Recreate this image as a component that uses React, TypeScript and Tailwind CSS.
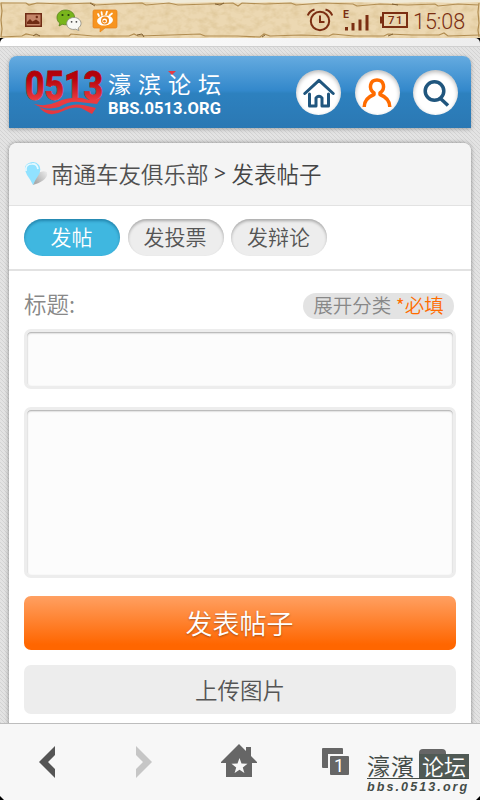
import * as React from "react";
import { clsx } from "clsx";

const TABS = ["发帖", "发投票", "发辩论"];

function PictureIcon() {
  return (
    <svg viewBox="0 0 17 14" className="h-3.5 w-[17px]" aria-hidden>
      <rect x="0.75" y="0.75" width="15.5" height="12.5" fill="#c48468" stroke="#6f2b14" strokeWidth="1.5" />
      <path d="M2 11V9l3-3 2.500 2.500L11 6.500l3.500 2.500v2z" fill="#6f2b14" />
      <circle cx="11.800" cy="4" r="1.200" fill="#6f2b14" />
    </svg>
  );
}

function WechatIcon() {
  return (
    <svg viewBox="0 0 26 22" className="h-[22px] w-[26px]" aria-hidden>
      <path
        d="M9.500 1C4.700 1 1 4.200 1 8.500c0 2.500 1 4.400 2.800 5.700L3 17l3.200-1.700c5.800 1.600 12.300-1 12.300-7.300C18.500 4.200 14.300 1 9.500 1z"
        fill="#79b51c"
        stroke="#55801a"
        strokeWidth="0.8"
      />
      <circle cx="6.500" cy="6" r="1.100" fill="#26400c" />
      <circle cx="12.500" cy="6" r="1.100" fill="#26400c" />
      <path
        d="M18 8.500c-4.200 0-7.300 2.700-7.300 6 0 4.500 4.800 6.700 9 5.700l3.200 1.300-.7-2.500c1.700-1.100 2.800-2.600 2.800-4.500 0-3.300-3-6-7-6z"
        fill="#f8f8f4"
        stroke="#8c8a80"
        strokeWidth="0.8"
      />
      <circle cx="15.600" cy="12.800" r="0.900" fill="#444" />
      <circle cx="20.400" cy="12.800" r="0.900" fill="#444" />
    </svg>
  );
}

function WeiboIcon() {
  return (
    <svg viewBox="0 0 26 24" className="h-6 w-[26px]" aria-hidden>
      <path d="M2.500 1h21q1.500 0 1.500 1.500v15q0 1.500-1.500 1.500H13l-5 4 .2-4H2.500Q1 19 1 17.500v-15Q1 1 2.500 1z" fill="#f7941f" stroke="#e5831a" strokeWidth="0.700" />
      <ellipse cx="13" cy="11.500" rx="8" ry="5" fill="#fff" transform="rotate(-7 13 11.500)" />
      <circle cx="13" cy="11.500" r="4" fill="#f28a16" />
      <circle cx="12.700" cy="12" r="2.400" fill="#fff" />
      <circle cx="12.500" cy="12.200" r="1.300" fill="#ef8111" />
      <path d="M7 7l-1-2M10 6L9.500 3M14 5.500l1-3M17.500 6.500l2.500-2" stroke="#fff" strokeWidth="1.700" strokeLinecap="round" />
    </svg>
  );
}

function AlarmIcon() {
  return (
    <svg viewBox="0 0 26 24" className="h-6 w-[26px]" fill="none" stroke="#7b2e12" strokeWidth="2" aria-hidden>
      <circle cx="13" cy="13" r="9.200" />
      <path d="M13 7.500V14h4.500M.8 7.500Q2.500 3 7.500 1.500M18.500 1.500Q23.500 3 25.200 7.500" />
    </svg>
  );
}

function SignalIcon() {
  return (
    <svg viewBox="0 0 26 22" className="h-[22px] w-[26px]" fill="#7b2e12" aria-hidden>
      <rect x="2" y="18" width="3" height="3.500" />
      <rect x="8.500" y="14" width="3" height="7.500" />
      <rect x="15.500" y="10.500" width="3" height="11" />
      <rect x="22.500" y="6" width="3" height="15.500" />
      <text x="0" y="8.500" fontSize="10.500" fontWeight="700" fontFamily="Roboto, sans-serif">E</text>
    </svg>
  );
}

function StatusBar() {
  return (
    <header className="relative h-[38px] shrink-0 bg-[#ecd8b2] font-[Roboto,sans-serif] text-[#7b2e12]">
      <svg className="absolute inset-0 h-[38px] w-[480px]" viewBox="0 0 480 38" aria-hidden>
        <filter id="grain" x="0" y="0" width="100%" height="100%">
          <feTurbulence type="fractalNoise" baseFrequency="0.11 0.16" numOctaves="3" seed="4" />
          <feColorMatrix values="0 0 0 0 0.62  0 0 0 0 0.45  0 0 0 0 0.2  0.9 0 0 0 -0.36" />
        </filter>
        <rect width="480" height="38" filter="url(#grain)" />
        <path d="M0 0H480V2L452 3 430 2 392 3 352 2 310 3 268 2 250 3 215 2 176 3 140 2 98 3 60 2 30 3 0 2z" fill="#f1ebd9" />
        <g fill="none" stroke="#b18d52" strokeWidth="1.200">
          <path d="M1 3L26 3l3 2 8-2 26 1 28-1 5 2 18-1 28-1 4 2 23-2 9 2 31-1 24-1 5 3 4-3 23 1 26-1 5 2 27-2 30 1 4 2 23-2 28 1 27-1 3 2 20-2 21 1" />
          <path d="M1 37l21-1 4-2 10 2 33 0 2-2 22 2 36 0 5-2 4 2 33-1 29-1 5 2 32 0 23 1 4-3 6 2 31-1 28 1 4-2 21 2 30 0 4-2 24 1 27 0 5-2 4 3 32-1" />
          <path d="M1 3l1 8-1 9 1 9-1 8M479 3l-1 9 1 11-1 7 1 7" />
        </g>
        <path d="M33 36l3-2 4 2M137 35l5-1 2 3M262 37l3-2M388 36l5-2M215 4l5 1 4-2M90 3l5 3M392 4l6 1" stroke="#806032" fill="none" />
      </svg>
      <div className="relative flex h-[38px] items-center pl-[25px] pr-3.5 pt-0.5">
        <PictureIcon />
        <div className="ml-3.5">
          <WechatIcon />
        </div>
        <div className="ml-[10px] mt-0.5">
          <WeiboIcon />
        </div>
        <div className="ml-auto flex items-center">
          <AlarmIcon />
          <div className="mb-px ml-2.5">
            <SignalIcon />
          </div>
          <svg viewBox="0 0 28 16" className="ml-[11px] h-4 w-7" fill="none" stroke="#7b2e12" strokeWidth="2" aria-hidden>
            <path d="M3 1H27V15H3z" />
            <path d="M1 4.500v7" />
            <text x="8" y="12" fill="#7b2e12" stroke="none" fontSize="11.500" letterSpacing="1.500" fontWeight="500" fontFamily="Roboto, sans-serif">71</text>
          </svg>
          <span className="ml-[5px] w-[53px] whitespace-nowrap pt-1 text-[21.500px] leading-none">15:08</span>
        </div>
      </div>
    </header>
  );
}

function Logo() {
  return (
    <div className="flex text-white">
      <svg viewBox="0 0 78 50" className="h-[50px] w-[78px] overflow-visible" aria-hidden>
        <defs>
          <linearGradient id="red" x1="0" y1="0" x2="0" y2="48" gradientUnits="userSpaceOnUse">
            <stop offset="0" stopColor="#a90008" />
            <stop offset="0.250" stopColor="#b8040c" />
            <stop offset="0.700" stopColor="#ec3c40" />
            <stop offset="1" stopColor="#e23840" />
          </linearGradient>
        </defs>
        <text
          x="-1"
          y="33"
          textLength="78"
          lengthAdjust="spacingAndGlyphs"
          fontFamily="Roboto, sans-serif"
          fontSize="40"
          fontWeight="800"
          fill="url(#red)"
          stroke="url(#red)"
          strokeWidth="0.800"
        >
          0513
        </text>
        <path
          d="M8 37Q20 40 31 35T56 31Q66 35 75 31L71 37 53 35Q43 34 33 40 20 44 8 37zM13 40Q25 46 36 42 46 36 57 38L70 41 66 47 55 41Q46 39 37 44 22 52 13 40z"
          fill="url(#red)"
        />
      </svg>
      <div className="relative ml-1 flex flex-col whitespace-nowrap pt-[3px]">
        <span className="h-[29px] text-[23px] font-normal leading-[27px] tracking-[7px]">濠滨论坛</span>
        <svg viewBox="0 0 8 6" className="absolute left-[60px] top-1 h-1.5 w-2" aria-hidden>
          <path d="M0 0h8L4 4z" fill="#e63b43" />
        </svg>
        <span className="pt-px font-[Roboto,sans-serif] text-[16.5px] font-bold leading-[18px] tracking-[0.1px]">BBS.0513.ORG</span>
      </div>
    </div>
  );
}

function RoundButton({ label, children }: { label: string; children: React.ReactNode }) {
  return (
    <button
      aria-label={label}
      className="flex size-[45px] items-center justify-center rounded-full bg-white shadow-[inset_0_2px_4px_rgba(0,0,0,0.28)]"
    >
      {children}
    </button>
  );
}

function SiteHeader() {
  return (
    <div className="flex h-[72px] shrink-0 items-center rounded-t-lg bg-[linear-gradient(#65abe0_0%,#3388cb_48%,#2d81bf_52%,#2b78b3_100%)] pl-[17px] pr-[13px] shadow-[0_1px_4px_rgba(0,0,0,0.3)]">
      <Logo />
      <div className="ml-auto flex gap-[13.500px] pt-px">
        <RoundButton label="首页">
          <svg viewBox="0 0 32 30" className="h-[30px] w-8" fill="none" stroke="#20567e" strokeWidth="3" strokeLinecap="round" strokeLinejoin="round" aria-hidden>
            <path d="M1.800 15.500L16 2.300l14.200 13.200M6.500 16v12H13v-8q3-3.500 6 0v8h6.500V16" />
          </svg>
        </RoundButton>
        <RoundButton label="我的">
          <svg viewBox="0 0 30 30" className="size-[30px]" fill="none" stroke="#ff6c00" strokeWidth="3.500" aria-hidden>
            <path d="M2.200 29c0-6 3.500-10 9.800-12.500v-1.500c-6-4.500-4-13 3-13s9 8.500 3 13v1.500c6.300 2.500 9.800 6.500 9.800 12.500" strokeLinejoin="round" />
          </svg>
        </RoundButton>
        <RoundButton label="搜索">
          <svg viewBox="0 0 28 28" className="size-7" fill="none" stroke="#20567e" strokeWidth="3.500" aria-hidden>
            <circle cx="12.500" cy="12" r="9.300" />
            <path d="M18.500 19.500l7.500 7" />
          </svg>
        </RoundButton>
      </div>
    </div>
  );
}

function Breadcrumb() {
  return (
    <div className="flex h-[63px] items-center border-b border-[#e2e2e2] bg-[#f4f4f4] pl-[15px] text-[22.5px] text-[#505050]">
      <svg viewBox="0 0 26 26" className="h-[26px] w-[26px]" aria-hidden>
        <defs>
          <linearGradient id="pinShade" x1="0.200" y1="0.800" x2="1" y2="0.200">
            <stop offset="0" stopColor="#aaa" />
            <stop offset="1" stopColor="#e6e6e6" />
          </linearGradient>
        </defs>
        <path d="M9 24Q10 15 14 12q6-3 9-.5 1 4-4 8-4 3-10 4.500z" fill="url(#pinShade)" />
        <path d="M9 24Q6 18 3 14-2 5 5 2q6-3 10 2 3 5-1 11-3 4-5 9z" fill="#91e2ff" />
        <path d="M2 10Q1 3 8 3q5-.5 6 5" fill="none" stroke="#e6f9ff" strokeWidth="1.700" />
      </svg>
      <span className="ml-px">南通车友俱乐部</span>
      <span className="mx-[5.500px] w-3 text-center font-['Open_Sans',sans-serif] text-[21px] font-medium text-[#444]">&gt;</span>
      <span className="text-[#444]">发表帖子</span>
    </div>
  );
}

function TypeTabs() {
  const [active, setActive] = React.useState(0);
  return (
    <div className="flex h-[65px] gap-[7.500px] border-b-2 border-[#e2e2e2] pl-[15px] pt-[13px]">
      {TABS.map((tab, i) => (
        <button
          key={tab}
          onClick={() => setActive(i)}
          className={clsx(
            "h-[37px] w-24 rounded-full pb-0.5 pr-px text-[21px] leading-none",
            i === active
              ? "bg-[#3fb7e0] text-white shadow-[inset_0_2px_3px_rgba(0,70,110,0.45)]"
              : "bg-[#ededed] text-[#555] shadow-[inset_0_2px_3px_rgba(0,0,0,0.28)]",
          )}
        >
          {tab}
        </button>
      ))}
    </div>
  );
}

const fieldClass =
  "block w-full resize-none rounded-[7px] border-[3px] border-[#ededed] bg-[#fcfcfc] px-2 outline-none shadow-[inset_0_1px_2px_rgba(0,0,0,0.35)]";

function PostForm() {
  return (
    <form className="flex flex-col px-[15px]" onSubmit={(e) => e.preventDefault()}>
      <div className="flex h-[58px] items-start justify-between pr-0.5">
        <label htmlFor="subject" className="pt-[15px] text-[22.5px] leading-[34px] text-[#888]">
          标题:
        </label>
        <button type="button" className="mt-[22px] flex h-[26px] w-[151px] items-center justify-center whitespace-pre rounded-full bg-[#e3e3e3] pb-[3px] text-[19.5px] leading-none text-[#888]">
          展开分类 <span className="text-[#ff6c00]">*必填</span>
        </button>
      </div>
      <input id="subject" className={clsx(fieldClass, "h-[60px]")} />
      <textarea aria-label="内容" className={clsx(fieldClass, "mt-[18px] h-[171px]")} />
      <button className="mt-[18px] h-[54px] rounded-[7px] bg-[linear-gradient(#ffa062,#ff6600_90%)] pb-0.5 pr-px text-[27px] leading-none text-white [text-shadow:0_1px_2px_rgba(0,0,0,0.35)]">
        发表帖子
      </button>
      <button type="button" className="mt-[15px] h-[49px] rounded-[7px] bg-[#ededed] text-[22.5px] leading-none text-[#555]">
        上传图片
      </button>
    </form>
  );
}

function Watermark() {
  return (
    <div className="absolute left-[367px] top-[29px] w-[102px] text-[#444c47]">
      <div className="flex h-[26px] items-center border-b border-[#444c47]">
        <span className="w-[52px] whitespace-nowrap font-['Noto_Sans_CJK_TC',sans-serif] text-[23px] font-normal leading-none tracking-[1px]">濠濱</span>
        <span className="h-6 w-[50px] whitespace-nowrap bg-[#505a55] pl-[3px] text-[22px] leading-[23px] text-white">论坛</span>
      </div>
      <div className="mt-px whitespace-nowrap font-['Liberation_Sans',sans-serif] text-[12.5px] font-bold italic leading-[15px] tracking-[2.100px]">
        bbs.0513.org
      </div>
    </div>
  );
}

function BottomBar() {
  return (
    <nav className="relative flex h-[77px] shrink-0 border-t border-[#bdbdbd] bg-[#f7f7f7]">
      <button className="flex w-24 items-center justify-center pr-0.5" aria-label="后退">
        <svg viewBox="0 0 16 32" className="h-8 w-4" aria-hidden>
          <path d="M16 0v9L9 16l7 7v9L0 16z" fill="#555" />
        </svg>
      </button>
      <button className="flex w-24 items-center justify-center" aria-label="前进">
        <svg viewBox="0 0 16 32" className="h-8 w-4" aria-hidden>
          <path d="M0 0v9l7 7-7 7v9l16-16z" fill="#c6c6c6" />
        </svg>
      </button>
      <button className="flex w-24 items-center justify-center pb-0.5 pr-0.5" aria-label="主页">
        <svg viewBox="0 0 36 34" className="h-[34px] w-9" aria-hidden>
          <path d="M18 0l7 7V3h5v9l6 6v1h-5v14H5V19H0v-1z" fill="#666" />
          <path d="M18.500 14l2 5.500 6 .3-4.700 3.600 1.600 5.700-4.900-3.300-4.900 3.300 1.600-5.700-4.700-3.600 6-.3z" fill="#f7f7f7" />
        </svg>
      </button>
      <button className="flex w-24 items-center justify-center" aria-label="窗口">
        <svg viewBox="0 0 28 28" className="size-7" aria-hidden>
          <rect width="21" height="20" rx="1" fill="#666" />
          <rect x="6" y="6" width="22" height="22" fill="#f7f7f7" />
          <rect x="8" y="8" width="19" height="19" rx="1" fill="#666" />
          <text x="17" y="23.500" fontSize="18" fontWeight="400" fill="#fff" textAnchor="middle" fontFamily="Roboto, sans-serif">1</text>
        </svg>
      </button>
      <button className="flex w-24 items-start justify-center pt-[25px]" aria-label="菜单">
        <span className="h-5 w-[27px] rounded-sm bg-[#666]" />
      </button>
      <Watermark />
      <svg viewBox="0 0 480 4" className="absolute bottom-0 left-0 h-1 w-[480px]" aria-hidden>
        <path d="M0 0l4 4H0zM480 0l-4 4h4z" />
      </svg>
    </nav>
  );
}

export default function App() {
  return (
    <div className="flex h-[800px] w-[480px] flex-col overflow-hidden bg-black font-['Noto_Sans_CJK_SC',sans-serif] font-[350]">
      <StatusBar />
      <div className="h-2 shrink-0 rounded-t-[5px] bg-linear-to-r from-white to-[#ededed]" />
      <main className="flex min-h-0 flex-1 flex-col gap-[15px] overflow-hidden border-t border-[#cfcfcf] bg-[linear-gradient(45deg,#d3d3d3_14%,#e3e3e3_14%_50%,#d3d3d3_50%_64%,#e3e3e3_64%)] bg-size-[4px_4px] px-[9px] pt-[9px]">
        <SiteHeader />
        <section className="h-[620px] shrink-0 overflow-hidden rounded-t-lg bg-white shadow-[0_0_4px_rgba(0,0,0,0.4)]">
          <Breadcrumb />
          <TypeTabs />
          <PostForm />
        </section>
      </main>
      <BottomBar />
    </div>
  );
}
